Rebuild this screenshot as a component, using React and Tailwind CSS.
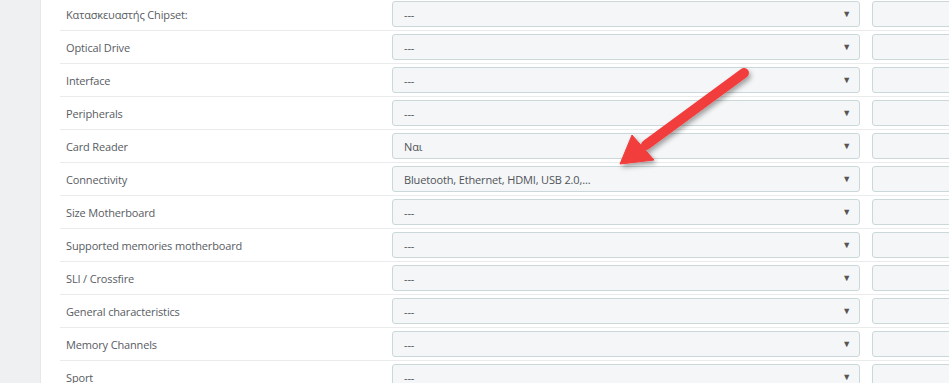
import React from 'react';

const rows = [
  { label: 'Κατασκευαστής Chipset:', value: '---' },
  { label: 'Optical Drive', value: '---' },
  { label: 'Interface', value: '---' },
  { label: 'Peripherals', value: '---' },
  { label: 'Card Reader', value: 'Ναι' },
  { label: 'Connectivity', value: 'Bluetooth, Ethernet, HDMI, USB 2.0,...' },
  { label: 'Size Motherboard', value: '---' },
  { label: 'Supported memories motherboard', value: '---' },
  { label: 'SLI / Crossfire', value: '---' },
  { label: 'General characteristics', value: '---' },
  { label: 'Memory Channels', value: '---' },
  { label: 'Sport', value: '---' },
];

function Arrow() {
  return (
    <svg className="absolute left-0 top-0 pointer-events-none" width="949" height="383">
      <defs>
        <filter id="sh" x="-20%" y="-20%" width="140%" height="140%">
          <feDropShadow dx="2" dy="3" stdDeviation="2.5" floodColor="#000" floodOpacity="0.35" />
        </filter>
      </defs>
      <g filter="url(#sh)" fill="#f23d3d" stroke="#f23d3d">
        <line x1="744" y1="73" x2="646" y2="145" strokeWidth="10" strokeLinecap="round" />
        <polygon points="620,164 632,135 654,160" strokeWidth="1" strokeLinejoin="round" />
      </g>
    </svg>
  );
}

export default function App() {
  return (
    <div
      className="relative flex w-[949px] h-[383px] overflow-hidden bg-white"
      style={{ fontFamily: '"Open Sans", "Noto Sans", sans-serif' }}
    >
      <div className="w-[41px] shrink-0 bg-[#eff0f2] border-r border-[#e4e6e9]" />
      <div className="flex-1 pl-[19px] -mt-[2px]">
        {rows.map((r) => (
          <div key={r.label} className="flex items-center h-[33px] border-b border-[#e9ebed]">
            <div className="w-[332px] shrink-0 pl-[6px] pt-[3px] text-[11px] tracking-[-0.15px] text-[#585c62]">
              {r.label}
            </div>
            <div className="w-[468px] shrink-0 h-[26px] flex items-center justify-between px-[11px] pt-[2px] bg-[#f4f6f7] border border-[#cad8da] rounded-[3px] text-[11px] tracking-[-0.15px] text-[#505459]">
              <span>{r.value}</span>
              <span className="text-[9px] text-[#555] -mr-[3px] -mt-[2px]">▼</span>
            </div>
            <div className="ml-[12px] w-[120px] shrink-0 h-[26px] bg-[#f4f6f7] border border-[#cad8da] rounded-[3px]" />
          </div>
        ))}
      </div>
      <Arrow />
    </div>
  );
}
